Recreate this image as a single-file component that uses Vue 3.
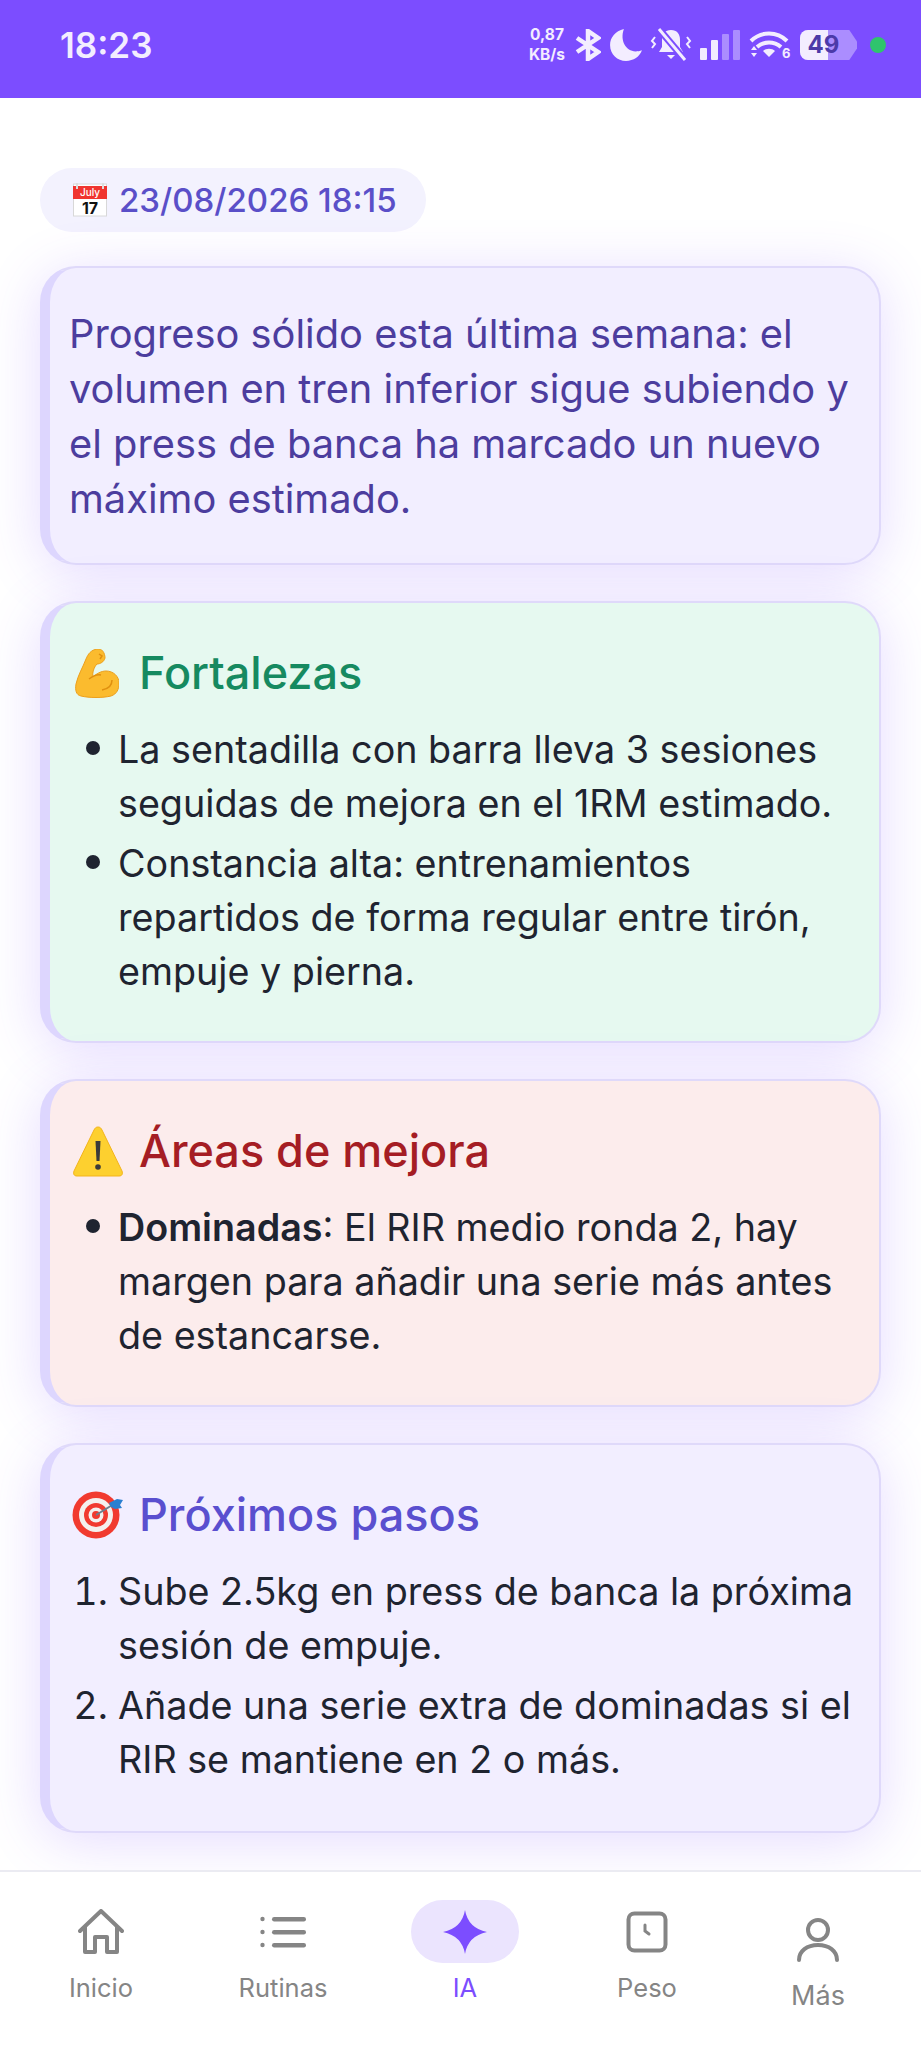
<script setup>
const tabs = [
  { label: 'Inicio', icon: 'home' },
  { label: 'Rutinas', icon: 'list' },
  { label: 'IA', icon: 'star', active: true },
  { label: 'Peso', icon: 'clock' },
  { label: 'Más', icon: 'user', more: true }
]
</script>

<template>
  <div class="screen">
    <header class="status">
      <span class="time">18:23</span>
      <div class="status-icons">
        <span class="speed">0,87<br />KB/s</span>
        <svg class="ic-bt" width="26" height="32" viewBox="0 0 26 32" fill="none" stroke="#f3edff" stroke-width="4.5">
          <path d="M2 9l21 14-10 7V2l10 7L2 23" />
        </svg>
        <svg class="ic-moon" width="34" height="34" viewBox="0 0 32 32">
          <path d="M14 1C6 3 1 9 1 16c0 9 7 15 15 15 7 0 13-4 15-10-2 1-4 1-6 1-9 0-15-10-11-21z" fill="#f3edff" />
        </svg>
        <svg class="ic-bell" width="42" height="34" viewBox="0 0 42 34" fill="none">
          <path d="M21 2c-6 0-9 4-9 10v7l-3 5h24l-3-5v-7c0-6-3-10-9-10z" fill="#f3edff" />
          <path d="M17 27h8l-4 4z" fill="#f3edff" />
          <path d="M9 1l26 31" stroke="#7c4dff" stroke-width="7" />
          <path d="M9 1l26 31" stroke="#f3edff" stroke-width="3" />
          <path d="M5 9L2 13l3 3-3 4M37 9l3 4-3 3 3 4" stroke="#f3edff" stroke-width="2" />
        </svg>
        <div class="bars">
          <i class="on" style="height: 12px"></i>
          <i class="on" style="height: 20px"></i>
          <i style="height: 26px"></i>
          <i style="height: 30px"></i>
        </div>
        <svg class="ic-wifi" width="43" height="30" viewBox="0 0 43 30" fill="none">
          <path d="M3 11C13 1 29 1 39 11M9 17c7-6 17-6 24 0" stroke="#f3edff" stroke-width="4" />
          <path d="M15 21c3-3 9-3 12 0l-6 6z" fill="#f3edff" />
          <path d="M3 20l3-4 3 4zM3 23l3 4 3-4z" fill="#f3edff" />
          <text x="34" y="28" class="wifi-six">6</text>
        </svg>
        <div class="battery">
          <div class="battery-body">
            <div class="battery-fill"></div>
            <span>49</span>
          </div>
        </div>
        <span class="dot"></span>
      </div>
    </header>

    <main class="content">
      <div class="date-pill">
        <svg width="34" height="34" viewBox="0 0 34 34">
          <rect x="0.5" y="1" width="33" height="32" fill="#fff" stroke="#d8d8d8" />
          <rect x="0" y="3" width="34" height="13" fill="#f0352f" />
          <rect x="3" y="0" width="2" height="6" fill="#ddd" />
          <rect x="29" y="0" width="2" height="6" fill="#ddd" />
          <text x="17" y="13" class="cal-month">July</text>
          <text x="17" y="31" class="cal-day">17</text>
        </svg>
        <span>23/08/2026 18:15</span>
      </div>

      <section class="card card-intro">
        <p>Progreso sólido esta última semana: el volumen en tren inferior sigue subiendo y el press de banca ha marcado un nuevo máximo estimado.</p>
      </section>

      <section class="card card-good">
        <h3>
          <span class="emoji">
            <svg class="muscle" width="44" height="49" viewBox="0 0 44 49">
              <path d="M22 0C16 1 13 5 11 10 8 18 3 26 1 35c-1 6 0 11 5 12 8 2 22 2 30 0 6-2 8-7 8-13 0-7-6-12-13-12-5 0-10 3-13 6-1-4 1-10 4-13 3 0 7-2 8-6 0-5-3-10-8-9z" fill="#fbbb2e" stroke="#ec9f1c" />
              <path d="M14 30c4-3 8-5 12-4M37 31c0 6-4 9-10 10M24 5l3 2-2 3" fill="none" stroke="#e0900f" stroke-width="1.5" />
            </svg>
          </span>
          Fortalezas
        </h3>
        <ul>
          <li>La sentadilla con barra lleva 3 sesiones seguidas de mejora en el 1RM estimado.</li>
          <li>Constancia alta: entrenamientos repartidos de forma regular entre tirón, empuje y pierna.</li>
        </ul>
      </section>

      <section class="card card-bad">
        <h3>
          <span class="emoji">
            <svg width="52" height="52" viewBox="0 0 52 52">
              <path d="M26 2c-2 0-3 1-4 3L2 46c-1 3 0 5 3 5h42c3 0 4-2 3-5L30 5c-1-2-2-3-4-3z" fill="#fdd02f" stroke="#f3b41b" />
              <path d="M23.5 16h5l-1 20h-3z" fill="#3a3a3a" />
              <circle cx="26" cy="42" r="2.8" fill="#3a3a3a" />
            </svg>
          </span>
          Áreas de mejora
        </h3>
        <ul>
          <li><strong>Dominadas</strong>: El RIR medio ronda 2, hay margen para añadir una serie más antes de estancarse.</li>
        </ul>
      </section>

      <section class="card card-next">
        <h3>
          <span class="emoji">
            <svg width="52" height="48" viewBox="0 0 52 48">
              <circle cx="24" cy="24" r="23.5" fill="#f13a2f" />
              <circle cx="24" cy="24" r="17" fill="#f4f0ee" />
              <circle cx="24" cy="24" r="12" fill="#f13a2f" />
              <circle cx="24" cy="24" r="7.5" fill="#f4f0ee" />
              <circle cx="24" cy="24" r="4" fill="#f13a2f" />
              <path d="M24 24L42 13" stroke="#6b7f8e" stroke-width="2" />
              <path d="M37 12l8-4 6 1-3 5 2 3-7 1-4-2z" fill="#2a7fd0" />
            </svg>
          </span>
          Próximos pasos
        </h3>
        <ol>
          <li>Sube 2.5kg en press de banca la próxima sesión de empuje.</li>
          <li>Añade una serie extra de dominadas si el RIR se mantiene en 2 o más.</li>
        </ol>
      </section>
    </main>

    <nav class="tabbar">
      <div v-for="tab in tabs" :key="tab.label" class="tab" :class="{ active: tab.active, more: tab.more }">
        <div class="tab-icon">
          <svg v-if="tab.icon === 'home'" width="46" height="46" viewBox="0 0 46 46" fill="none" stroke="#858585" stroke-width="4" stroke-linejoin="round" stroke-linecap="round">
            <path d="M2 22L23 2l21 20M7 18v25h10V28h12v15h10V18" />
          </svg>
          <svg v-else-if="tab.icon === 'list'" width="46" height="34" viewBox="0 0 46 34" fill="#858585">
            <circle cx="2.5" cy="4" r="2.2" />
            <circle cx="2.5" cy="17" r="2.2" />
            <circle cx="2.5" cy="30" r="2.2" />
            <rect x="12" y="2" width="34" height="4.5" rx="2.2" />
            <rect x="12" y="15" width="34" height="4.5" rx="2.2" />
            <rect x="12" y="28" width="34" height="4.5" rx="2.2" />
          </svg>
          <svg v-else-if="tab.icon === 'star'" width="44" height="44" viewBox="0 0 44 44">
            <path d="M22 0Q25 18 44 22 25 26 22 44 19 26 0 22 19 18 22 0z" fill="#7c4dff" />
          </svg>
          <svg v-else-if="tab.icon === 'clock'" width="42" height="42" viewBox="0 0 42 42" fill="none" stroke="#858585" stroke-linecap="round">
            <rect x="2.5" y="2.5" width="37" height="37" rx="6" stroke-width="4" />
            <path d="M19 14v6l4 3" stroke-width="3" />
          </svg>
          <svg v-else width="42" height="44" viewBox="0 0 42 44" fill="none" stroke="#858585" stroke-width="4" stroke-linecap="round">
            <circle cx="21" cy="12" r="10" />
            <path d="M2 42c0-9 8-15 19-15s19 6 19 15" />
          </svg>
        </div>
        <span>{{ tab.label }}</span>
      </div>
    </nav>
  </div>
</template>

<style>
html, body {
  margin: 0;
  background: #fff;
}
</style>

<style scoped>
.screen {
  width: 921px;
  height: 2048px;
  display: flex;
  flex-direction: column;
  overflow: hidden;
  background: #fff;
  font-family: Inter, "Noto Sans", sans-serif;
}

.status {
  flex: 0 0 98px;
  box-sizing: border-box;
  display: flex;
  align-items: center;
  justify-content: space-between;
  padding: 0 35px 8px 60px;
  background: #7c4dff;
  color: #f3edff;
  position: relative;
  z-index: 2;
}

.time {
  font-size: 35px;
  font-weight: 600;
}

.status-icons {
  display: flex;
  align-items: center;
}

.speed {
  font-size: 15.5px;
  font-weight: 700;
  line-height: 20px;
  text-align: center;
  width: 42px;
}

.ic-bt { margin-left: 7px; }
.ic-moon { margin-left: 8px; }
.ic-bell { margin-left: 7px; }

.bars {
  display: flex;
  align-items: flex-end;
  gap: 4px;
  height: 30px;
  margin-left: 8px;
}

.bars i {
  width: 7px;
  background: #ab8dff;
  border-radius: 1px;
}

.bars i.on {
  background: #f3edff;
}

.ic-wifi { margin-left: 8px; }

.wifi-six {
  font-size: 13px;
  font-weight: 700;
  fill: #f3edff;
}

.battery {
  width: 57px;
  height: 30px;
  margin-left: 9px;
  position: relative;
}

.battery::after {
  content: "";
  position: absolute;
  right: 0;
  top: 0;
  width: 11px;
  height: 30px;
  clip-path: polygon(0 0, 30% 0, 100% 38%, 100% 62%, 30% 100%, 0 100%);
  background: #ab8dff;
}

.battery-body {
  width: 47px;
  height: 30px;
  position: relative;
  border-radius: 8px 0 0 8px;
  background: #ab8dff;
  overflow: hidden;
  text-align: center;
}

.battery-fill {
  position: absolute;
  left: 0;
  top: 0;
  bottom: 0;
  width: 28px;
  background: #f3edff;
}

.battery span {
  position: relative;
  font-size: 24px;
  font-weight: 700;
  line-height: 30px;
  color: #4c3aa8;
}

.dot {
  width: 16px;
  height: 16px;
  margin-left: 13px;
  border-radius: 50%;
  background: #2fc46d;
}

.content {
  flex: 1;
  min-height: 0;
  padding: 70px 40px 0;
  display: flex;
  flex-direction: column;
  gap: 36px;
}

.date-pill {
  align-self: flex-start;
  height: 64px;
  margin-bottom: -2px;
  padding: 0 29px 0 33px;
  box-sizing: border-box;
  display: flex;
  align-items: center;
  gap: 12px;
  border-radius: 32px;
  background: #f3f2fe;
  color: #5a4fc8;
  font-size: 33px;
  font-weight: 500;
}

.cal-month {
  font-size: 10px;
  fill: #fff;
  text-anchor: middle;
}

.cal-day {
  font-size: 16px;
  font-weight: 700;
  fill: #111;
  text-anchor: middle;
}

.card {
  box-sizing: border-box;
  border: 2px solid #dfd9fa;
  border-left: 10px solid #ddd6fe;
  border-radius: 36px;
  box-shadow: 0 8px 56px rgba(124, 77, 255, 0.2);
  padding: 42px 14px 43px 19px;
  color: #1f2430;
  font-size: 37.7px;
  line-height: 54px;
}

.card p {
  margin: 0;
  color: #4c3d9e;
  font-size: 39.8px;
  line-height: 55px;
}

.card-intro,
.card-next {
  background: #f2eeff;
}

.card-intro {
  padding-top: 38px;
  padding-bottom: 37px;
}

.card-next {
  padding-bottom: 45px;
}

.card-good { background: #e6f9f0; }
.card-bad { background: #fcecec; }

.card h3 {
  margin: 0 0 21px;
  height: 56px;
  display: flex;
  align-items: center;
  font-size: 45px;
  font-weight: 500;
  line-height: 56px;
}

.card-good h3 { color: #168a60; }
.card-bad h3 { color: #a51d24; }
.card-next h3 { color: #5a4fcf; }

.emoji {
  flex: 0 0 67px;
  height: 52px;
  margin-left: 3px;
  display: flex;
  align-items: center;
}

.muscle {
  margin-left: 3px;
}

.card ul,
.card ol {
  margin: 0;
  padding-left: 49px;
  display: flex;
  flex-direction: column;
  gap: 6px;
}

.card ul {
  list-style: none;
}

.card ul li {
  position: relative;
}

.card ul li::before {
  content: "";
  position: absolute;
  left: -32px;
  top: 19px;
  width: 14px;
  height: 14px;
  border-radius: 50%;
  background: #1f2430;
}

.card strong {
  font-weight: 600;
}

.tabbar {
  flex: 0 0 178px;
  box-sizing: border-box;
  display: grid;
  grid-template-columns: repeat(4, 182px) 160px;
  align-content: start;
  padding: 28px 0 0 10px;
  border-top: 2px solid #ebebf2;
  background: #fff;
  position: relative;
  z-index: 1;
}

.tab {
  display: flex;
  flex-direction: column;
  align-items: center;
  color: #858585;
  font-size: 25.5px;
  line-height: 32px;
}

.tab-icon {
  width: 108px;
  height: 63px;
  margin-bottom: 9px;
  display: flex;
  align-items: center;
  justify-content: center;
  border-radius: 32px;
}

.tab.active {
  color: #7c4dff;
}

.tab.active .tab-icon {
  background: #ebe4fe;
}

.tab.more {
  margin-top: 8px;
  font-size: 27px;
}
</style>
